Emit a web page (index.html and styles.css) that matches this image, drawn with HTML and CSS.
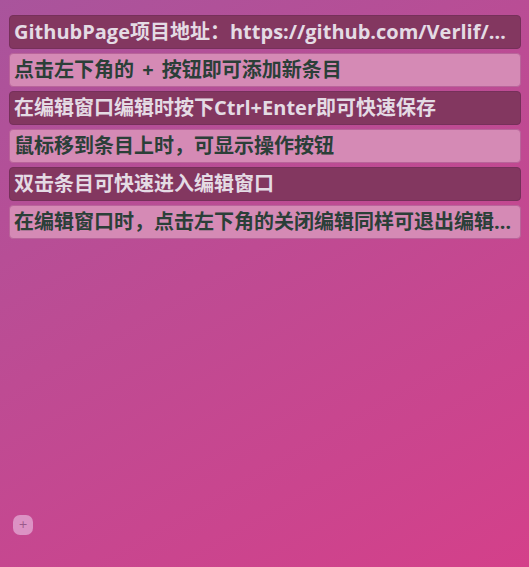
FILE: index.html
```html
<!DOCTYPE html>
<html lang="zh">
<head>
<meta charset="utf-8">
<link rel="stylesheet" href="styles.css">
</head>
<body>
<div class="page">
  <ul class="list">
    <li class="item dark">GithubPage项目地址：https://github.com/Verlif/Notes</li>
    <li class="item light">点击左下角的 <span class="plus">+</span> 按钮即可添加新条目</li>
    <li class="item dark">在编辑窗口编辑时按下Ctrl+Enter即可快速保存</li>
    <li class="item light">鼠标移到条目上时，可显示操作按钮</li>
    <li class="item dark">双击条目可快速进入编辑窗口</li>
    <li class="item light">在编辑窗口时，点击左下角的关闭编辑同样可退出编辑窗口</li>
  </ul>
  <div class="add">+</div>
</div>
</body>
</html>
```
FILE: styles.css
```css
html, body {
  margin: 0;
  padding: 0;
  width: 529px;
  height: 567px;
  overflow: hidden;
}
body {
  background: linear-gradient(150deg, #a9549c 0%, #be4b93 45%, #d4408a 100%);
  font-family: "Open Sans", "Noto Sans CJK SC", sans-serif;
}
.page {
  position: relative;
  height: 567px;
  padding: 15px 8px 0 9px;
  box-sizing: border-box;
}
.list {
  list-style: none;
  margin: 0;
  padding: 0;
  display: flex;
  flex-direction: column;
  gap: 4px;
}
.item {
  height: 34px;
  box-sizing: border-box;
  border-radius: 4px;
  padding: 0 4px;
  font-size: 20px;
  font-weight: 700;
  line-height: 32px;
  white-space: nowrap;
  overflow: hidden;
  text-overflow: ellipsis;
}
.plus {
  padding: 0 3px;
}
.dark {
  background: #833760;
  border: 1px solid #76305a;
  color: #e4dbe4;
}
.light {
  background: #d58ab5;
  border: 1px solid #b9649a;
  color: #2b3f38;
}
.add {
  position: absolute;
  left: 13px;
  top: 515px;
  width: 20px;
  height: 20px;
  border-radius: 7px;
  background: #dc92c4;
  color: #9a5a8a;
  font-size: 11px;
  line-height: 20px;
  text-align: center;
  font-family: "DejaVu Sans", sans-serif;
}
```
